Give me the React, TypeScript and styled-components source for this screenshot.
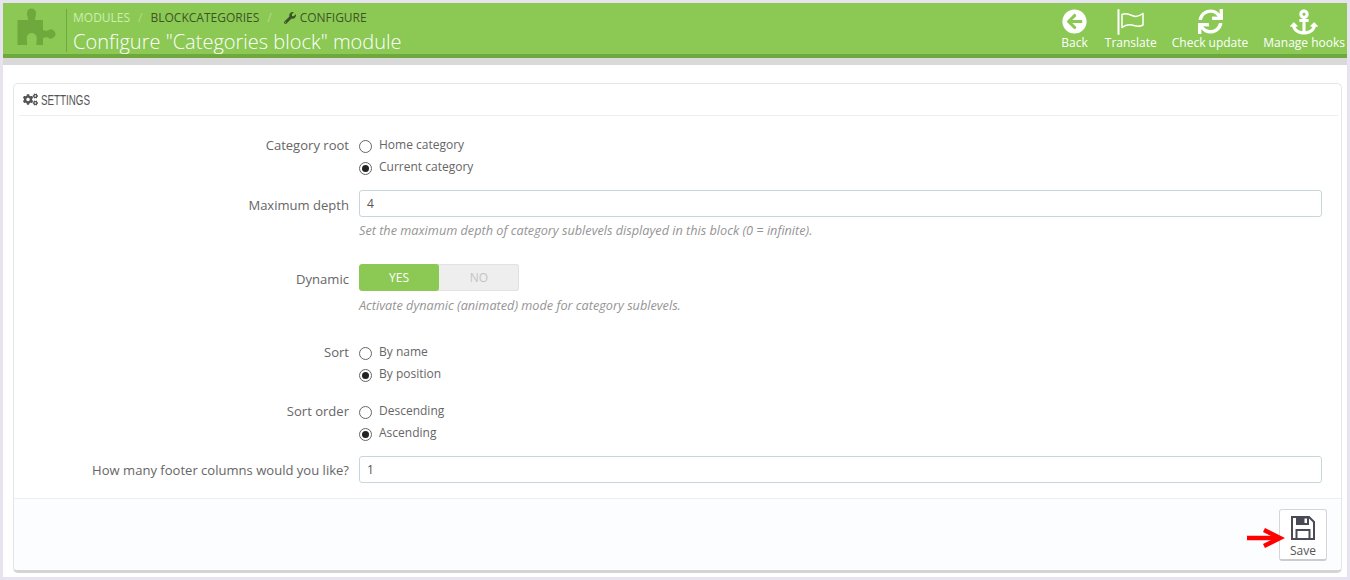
import styled, { createGlobalStyle } from 'styled-components';
import { FaAnchor, FaArrowCircleLeft, FaCogs, FaSync, FaWrench } from 'react-icons/fa';

const GlobalStyle = createGlobalStyle`
	html, body {
		margin: 0;
		padding: 0;
		background: #e7e3f1;
	}
	body {
		font-family: 'Open Sans', 'Liberation Sans', sans-serif;
		color: #666;
	}
`;

const Frame = styled.div`
	width: 1350px;
	height: 580px;
	box-sizing: border-box;
	padding: 3px 3px 3px 3px;
	display: flex;
	flex-direction: column;
	overflow: hidden;
`;

const Header = styled.header`
	height: 51px;
	flex: none;
	background: #8bc954;
	border-bottom: 4px solid #6fa83c;
	display: flex;
	justify-content: space-between;
`;

const TitleArea = styled.div`
	display: flex;
	align-items: flex-start;
	padding: 5px 0 0 13px;
`;

const ModuleIcon = styled.svg`
	flex: none;
	color: #6fa83c;
	margin-right: 8px;
`;

const TitleBlock = styled.div`
	border-left: 1px solid #6fa83c;
	height: 43px;
	margin-top: 1px;
	padding: 0 0 0 6px;
`;

const Crumbs = styled.div`
	display: flex;
	align-items: center;
	font-size: 12px;
	line-height: 17px;
	height: 17px;
	margin-bottom: 2px;
	color: #3e5a26;
`;

const Crumb = styled.span<{ $muted?: boolean }>`
	color: ${(p) => (p.$muted ? '#cdeeb0' : '#3d5526')};
	display: inline-flex;
	align-items: center;
	gap: 4px;
`;

const Slash = styled.span<{ $last?: boolean }>`
	color: #b3dc8f;
	margin: 0 ${(p) => (p.$last ? 12 : 8)}px 0 8px;
`;

const Title = styled.h1`
	margin: 0;
	font-size: 20px;
	font-weight: 300;
	line-height: 27px;
	color: #fff;
	white-space: nowrap;
`;

const Toolbar = styled.nav`
	display: flex;
	align-items: flex-start;
	gap: 15px;
	padding: 5px 2px 0 0;
`;

const ToolButton = styled.a<{ $extra?: number }>`
	display: flex;
	flex-direction: column;
	align-items: center;
	color: #fff;
	font-size: 12px;
	line-height: 16px;
	white-space: nowrap;
	margin-right: ${(p) => p.$extra ?? 0}px;
`;

const ToolIcon = styled.span<{ $size?: number }>`
	height: 27px;
	font-size: ${(p) => p.$size ?? 25}px;
	line-height: 0;
	display: flex;
	align-items: center;
`;

const Band = styled.div`
	height: 7px;
	flex: none;
	background: #d9d9d9;
`;

const Content = styled.main`
	flex: 1;
	background: #fff;
	padding: 18px 5px 4px 10px;
	display: flex;
`;

const Panel = styled.section`
	flex: 1;
	border: 1px solid #e6e6e6;
	border-bottom: 3px solid #d4d4d4;
	border-radius: 5px;
	display: flex;
	flex-direction: column;
	min-width: 0;
`;

const PanelHeading = styled.h2`
	margin: 0 3px 0 5px;
	height: 32px;
	box-sizing: border-box;
	border-bottom: 1px solid #eee;
	display: flex;
	align-items: center;
	gap: 3px;
	padding-left: 4px;
	font-family: 'Liberation Sans', sans-serif;
	font-size: 14px;
	font-weight: 400;
	color: #555;
`;

const HeadingText = styled.span`
	display: inline-block;
	transform: scaleX(0.7);
	transform-origin: left center;
`;

const FormBody = styled.div`
	flex: 1;
	display: flex;
	flex-direction: column;
	padding-top: 18px;
`;

const Row = styled.div<{ $gap: number }>`
	display: grid;
	grid-template-columns: 335px 963px;
	column-gap: 10px;
	margin-bottom: ${(p) => p.$gap}px;
`;

const Label = styled.label<{ $top: number }>`
	text-align: right;
	font-size: 13.05px;
	line-height: 18px;
	padding-top: ${(p) => p.$top}px;
	color: #666;
	white-space: nowrap;
`;

const RadioGroup = styled.div`
	display: flex;
	flex-direction: column;
`;

const RadioRow = styled.div`
	display: flex;
	align-items: center;
	height: 22px;
	box-sizing: border-box;
	padding-bottom: 1px;
	font-size: 12px;
	color: #666;
	gap: 7px;
`;

const RadioMark = styled.span<{ $checked?: boolean }>`
	width: 13px;
	height: 13px;
	box-sizing: border-box;
	flex: none;
	margin-top: 3px;
	border-radius: 50%;
	border: 1px solid #666;
	background: #fff;
	display: flex;
	align-items: center;
	justify-content: center;
	&::after {
		content: '';
		width: 7px;
		height: 7px;
		border-radius: 50%;
		background: ${(p) => (p.$checked ? '#222' : 'transparent')};
	}
`;

const TextInput = styled.div`
	height: 27px;
	box-sizing: border-box;
	border: 1px solid #c7d6db;
	border-radius: 3px;
	padding: 0 7px;
	font-size: 12px;
	line-height: 25px;
	color: #555;
	background: #fff;
`;

const Help = styled.p<{ $top: number }>`
	margin: 0;
	font-size: 12.7px;
	font-style: italic;
	line-height: 16px;
	color: #959595;
	padding-top: ${(p) => p.$top}px;
`;

const Switch = styled.div`
	display: flex;
	width: 160px;
	height: 27px;
	border-radius: 3px;
	overflow: hidden;
	background: #eee;
	box-shadow: inset 0 0 0 1px #e2e2e2;
`;

const SwitchOption = styled.span<{ $on?: boolean }>`
	width: 80px;
	display: flex;
	align-items: center;
	justify-content: center;
	font-size: 12px;
	color: ${(p) => (p.$on ? '#fff' : '#c4c4c4')};
	background: ${(p) => (p.$on ? '#8bc954' : 'transparent')};
	border-radius: 3px;
`;

const Footer = styled.footer`
	height: 72px;
	flex: none;
	background: #fcfdfe;
	border-top: 1px solid #eee;
	border-radius: 0 0 5px 5px;
	display: flex;
	justify-content: flex-end;
	align-items: flex-start;
	padding: 10px 14px 0 0;
	box-sizing: border-box;
`;

const SaveWrap = styled.div`
	position: relative;
`;

const SaveButton = styled.div`
	width: 48px;
	height: 52px;
	box-sizing: border-box;
	background: #fff;
	border: 1px solid #d6d6d6;
	border-bottom: 2px solid #ccc;
	border-radius: 3px;
	display: flex;
	flex-direction: column;
	align-items: center;
	font-size: 12px;
	line-height: 16px;
	color: #555;
	padding-top: 6px;
`;

const SaveGlyph = styled.svg`
	display: block;
	margin-bottom: 3px;
`;

const ArrowMark = styled.svg`
	position: absolute;
	left: -32px;
	top: 19px;
`;

const PuzzleIcon = () => (
	<ModuleIcon width="42" height="38" viewBox="0 0 42 38" fill="currentColor">
		<path d="M1.500 12H12C12.500 10 11 9 11 5A4.500 4.500 0 0 1 20 5C20 9 18.500 10 19 12H27V22C29 22.500 30 23 32 22.500A4.500 4.500 0 1 1 32 29.500C30 29 29 29.500 27 30V37H20.500C20 35 20.800 34 20.800 30A5 5 0 0 0 10.800 30C10.800 34 11.500 35 11 37H1.500Z" />
	</ModuleIcon>
);

const FlagIcon = () => (
	<svg width="28" height="26" viewBox="0 0 28 26" fill="none" stroke="#fff">
		<path d="M1.500 1v24" strokeWidth="2" strokeLinecap="round" />
		<path d="M5 5.500C9 3.500 12 5 15 6.500S22 7.500 26 4.500V16C22 18.500 19 17 15 16S8 16 5 18.500Z" strokeWidth="1.500" strokeLinejoin="round" />
	</svg>
);

const FloppyIcon = () => (
	<SaveGlyph width="24" height="24" viewBox="0 0 24 24">
		<path d="M1 1H18L23 6V23H1Z" fill="none" stroke="#4a4a55" strokeWidth="2" />
		<path d="M5 1H18V9H5Z" fill="#4a4a55" />
		<path d="M13.500 2.500H16V7H13.500Z" fill="#fff" />
		<path d="M5.500 14H18.500V23H5.500Z" fill="none" stroke="#4a4a55" strokeWidth="2" />
	</SaveGlyph>
);

function App() {
	return (
		<>
			<GlobalStyle />
			<Frame>
				<Header>
					<TitleArea>
						<PuzzleIcon />
						<TitleBlock>
							<Crumbs>
								<Crumb $muted>MODULES</Crumb>
								<Slash>/</Slash>
								<Crumb>BLOCKCATEGORIES</Crumb>
								<Slash $last>/</Slash>
								<Crumb>
									<FaWrench size={12} />
									CONFIGURE
								</Crumb>
							</Crumbs>
							<Title>Configure "Categories block" module</Title>
						</TitleBlock>
					</TitleArea>
					<Toolbar>
						<ToolButton $extra={2}>
							<ToolIcon>
								<FaArrowCircleLeft />
							</ToolIcon>
							Back
						</ToolButton>
						<ToolButton>
							<ToolIcon>
								<FlagIcon />
							</ToolIcon>
							Translate
						</ToolButton>
						<ToolButton>
							<ToolIcon>
								<FaSync />
							</ToolIcon>
							Check update
						</ToolButton>
						<ToolButton>
							<ToolIcon $size={28}>
								<FaAnchor />
							</ToolIcon>
							Manage hooks
						</ToolButton>
					</Toolbar>
				</Header>
				<Band />
				<Content>
					<Panel>
						<PanelHeading>
							<FaCogs size={15} />
							<HeadingText>SETTINGS</HeadingText>
						</PanelHeading>
						<FormBody>
							<Row $gap={12}>
								<Label $top={2}>Category root</Label>
								<RadioGroup>
									<RadioRow>
										<RadioMark />
										Home category
									</RadioRow>
									<RadioRow>
										<RadioMark $checked />
										Current category
									</RadioRow>
								</RadioGroup>
							</Row>
							<Row $gap={26}>
								<Label $top={6}>Maximum depth</Label>
								<div>
									<TextInput>4</TextInput>
									<Help $top={5}>Set the maximum depth of category sublevels displayed in this block (0 = infinite).</Help>
								</div>
							</Row>
							<Row $gap={28}>
								<Label $top={6}>Dynamic</Label>
								<div>
									<Switch>
										<SwitchOption $on>YES</SwitchOption>
										<SwitchOption>NO</SwitchOption>
									</Switch>
									<Help $top={6}>Activate dynamic (animated) mode for category sublevels.</Help>
								</div>
							</Row>
							<Row $gap={15}>
								<Label $top={2}>Sort</Label>
								<RadioGroup>
									<RadioRow>
										<RadioMark />
										By name
									</RadioRow>
									<RadioRow>
										<RadioMark $checked />
										By position
									</RadioRow>
								</RadioGroup>
							</Row>
							<Row $gap={12}>
								<Label $top={2}>Sort order</Label>
								<RadioGroup>
									<RadioRow>
										<RadioMark />
										Descending
									</RadioRow>
									<RadioRow>
										<RadioMark $checked />
										Ascending
									</RadioRow>
								</RadioGroup>
							</Row>
							<Row $gap={0}>
								<Label $top={5}>How many footer columns would you like?</Label>
								<TextInput>1</TextInput>
							</Row>
						</FormBody>
						<Footer>
							<SaveWrap>
								<ArrowMark width="38" height="20" viewBox="0 0 38 20">
									<path d="M0 10H32" stroke="#f00" strokeWidth="4.500" />
									<path d="M17 2L33 10L17 18" stroke="#f00" strokeWidth="4.500" fill="none" />
								</ArrowMark>
								<SaveButton>
									<FloppyIcon />
									Save
								</SaveButton>
							</SaveWrap>
						</Footer>
					</Panel>
				</Content>
			</Frame>
		</>
	);
}

export default App;
